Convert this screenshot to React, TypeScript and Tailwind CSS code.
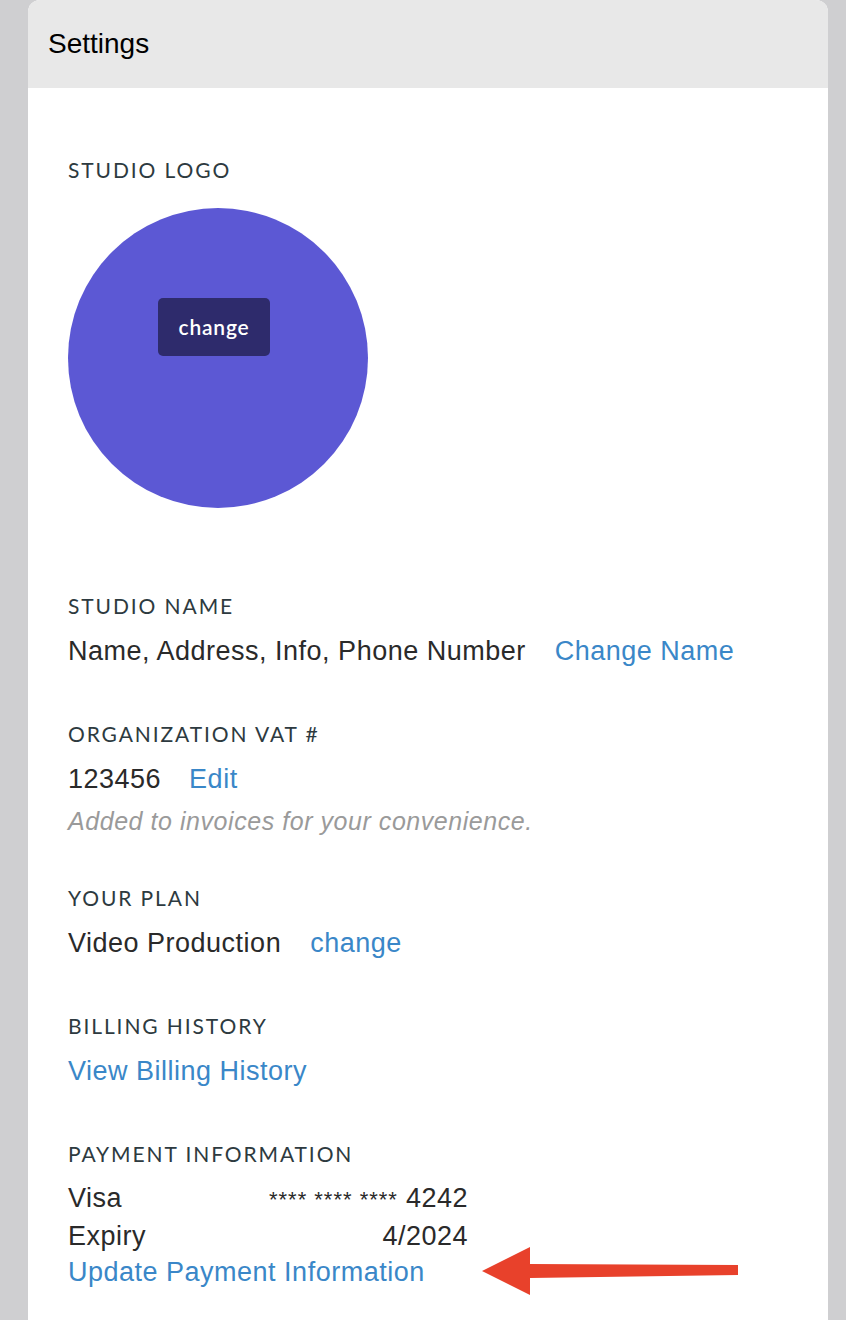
import React from "react";

const label =
  "font-['Lato','Open_Sans',sans-serif] text-[21px] leading-[24px] tracking-[1.9px] text-[#2d3a40] uppercase";
const body =
  "font-['Liberation_Sans','Helvetica',Arial,sans-serif] text-[27px] leading-[36px] tracking-[0.5px] text-[#2a2a2a]";
const link = "text-[#3a87c8]";

export default function App() {
  return (
    <div className="min-h-[1320px] bg-[#cfcfd1] px-[28px] pr-[18px]">
      <div className="w-[800px] min-h-[1320px] bg-white rounded-t-[12px] overflow-hidden">
        <div className="h-[88px] bg-[#e8e8e8] flex items-center pl-[20px]">
          <span className="font-['Liberation_Sans','Helvetica',Arial,sans-serif] text-[28px] text-black">
            Settings
          </span>
        </div>
        <div className="pl-[40px] pt-[70px]">
          <div className={label}>Studio Logo</div>
          <div className="mt-[26px] w-[300px] h-[300px] rounded-full bg-[#5c58d4] flex justify-center pt-[90px]">
            <div className="w-[112px] h-[58px] rounded-[5px] bg-[#2e2b6c] flex items-center justify-center font-['Lato','Open_Sans',sans-serif] text-[21px] font-semibold text-white tracking-[0.8px] -ml-[8px]">
              change
            </div>
          </div>

          <div className={`${label} mt-[86px]`}>Studio Name</div>
          <div className={`${body} mt-[15px] flex`}>
            <span>Name, Address, Info, Phone Number</span>
            <span className={`${link} ml-[29px]`}>Change Name</span>
          </div>

          <div className={`${label} mt-[53px]`}>Organization VAT #</div>
          <div className={`${body} mt-[15px] flex`}>
            <span>123456</span>
            <span className={`${link} ml-[28px]`}>Edit</span>
          </div>
          <div className="font-['Liberation_Sans','Helvetica',Arial,sans-serif] italic text-[25px] leading-[36px] tracking-[0.55px] text-[#9a9a9a] mt-[6px]">
            Added to invoices for your convenience.
          </div>

          <div className={`${label} mt-[47px]`}>Your Plan</div>
          <div className={`${body} mt-[15px] flex`}>
            <span>Video Production</span>
            <span className={`${link} ml-[29px]`}>change</span>
          </div>

          <div className={`${label} mt-[53px]`}>Billing History</div>
          <div className={`${body} mt-[15px]`}>
            <span className={link}>View Billing History</span>
          </div>

          <div className={`${label} mt-[53px]`}>Payment Information</div>
          <div className="relative mt-[14px] w-[400px]">
            <div className={`${body} flex justify-between`}>
              <span>Visa</span>
              <span>
                <span className="text-[22px] tracking-[1px]">**** **** ****</span> 4242
              </span>
            </div>
            <div className={`${body} flex justify-between`}>
              <span>Expiry</span>
              <span>4/2024</span>
            </div>
            <div className={`${body}`}>
              <span className={link}>Update Payment Information</span>
            </div>
            <svg
              className="absolute left-[414px] top-[65px]"
              width="260"
              height="52"
              viewBox="0 0 260 52"
            >
              <polygon
                points="0,26 48,2 48,19 256,20 256,30 48,33 48,50"
                fill="#e8412b"
              />
            </svg>
          </div>
        </div>
      </div>
    </div>
  );
}
